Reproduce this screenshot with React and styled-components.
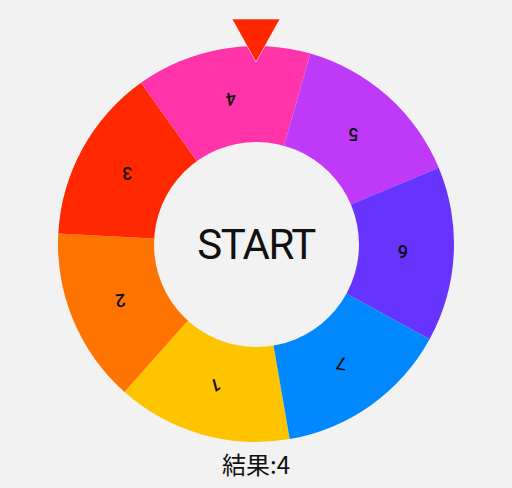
import React, { useState } from "react";
import styled, { createGlobalStyle } from "styled-components";

const GlobalStyle = createGlobalStyle`
  html, body {
    margin: 0;
    padding: 0;
    background: #f2f2f2;
  }
  body {
    font-family: Roboto, "Noto Sans CJK JP", sans-serif;
    color: #111;
  }
`;

const Screen = styled.div`
  display: flex;
  flex-direction: column;
  align-items: center;
  min-height: 488px;
`;

const WheelBox = styled.div`
  position: relative;
  width: ${(p) => p.size}px;
  height: ${(p) => p.size}px;
  margin-top: 46px;
`;

const Pointer = styled.svg`
  position: absolute;
  top: -28px;
  left: 50%;
  margin-left: -25px;
  z-index: 2;
`;

const Hub = styled.button`
  position: absolute;
  top: 50%;
  left: 50%;
  width: ${(p) => p.size}px;
  height: ${(p) => p.size}px;
  margin: ${(p) => -p.size / 2}px 0 0 ${(p) => -p.size / 2}px;
  border: none;
  border-radius: 50%;
  background: #f2f2f2;
  font-family: Roboto, sans-serif;
  font-size: 42px;
  letter-spacing: -1.5px;
  color: #111;
  padding: 0;
  cursor: pointer;
  display: flex;
  align-items: center;
  justify-content: center;
`;

const Result = styled.div`
  margin-top: 8px;
  font-family: "Noto Sans CJK JP", sans-serif;
  font-size: 24px;
  line-height: 28px;
  color: #111;
`;

const SEGMENTS = [
  { label: "1", color: "#ffc400", tilt: 165 },
  { label: "2", color: "#ff7300", tilt: 175 },
  { label: "3", color: "#ff2800", tilt: 180 },
  { label: "4", color: "#ff33aa", tilt: 172 },
  { label: "5", color: "#bf3af8", tilt: 180 },
  { label: "6", color: "#6633ff", tilt: 180 },
  { label: "7", color: "#0088ff", tilt: 188 },
];

const SIZE = 396;
const R = SIZE / 2;
const STEP = 360 / SEGMENTS.length;

// angle measured clockwise from 12 o'clock
const pt = (deg, r) => {
  const a = (deg * Math.PI) / 180;
  return [R + r * Math.sin(a), R - r * Math.cos(a)];
};

function Wheel({ offset }) {
  return (
    <svg width={SIZE} height={SIZE} viewBox={`0 0 ${SIZE} ${SIZE}`}>
      {SEGMENTS.map((s, i) => {
        const mid = offset + (i - 3) * STEP;
        const [x0, y0] = pt(mid - STEP / 2, R);
        const [x1, y1] = pt(mid + STEP / 2, R);
        const [lx, ly] = pt(mid, 147);
        return (
          <g key={s.label}>
            <path
              d={`M${R} ${R} L${x0} ${y0} A${R} ${R} 0 0 1 ${x1} ${y1} Z`}
              fill={s.color}
            />
            <text
              x={lx}
              y={ly}
              textAnchor="middle"
              dominantBaseline="central"
              fontFamily="Roboto, sans-serif"
              fontSize="18"
              fontWeight="500"
              fill="#111"
              transform={`rotate(${s.tilt} ${lx} ${ly})`}
            >
              {s.label}
            </text>
          </g>
        );
      })}
    </svg>
  );
}

export default function App() {
  const [result] = useState(4);
  return (
    <Screen>
      <GlobalStyle />
      <WheelBox size={SIZE}>
        <Pointer width="50" height="46" viewBox="0 0 50 46">
          <polygon
            points="1,1 49,1 25,44"
            fill="#ff2600"
            stroke="rgba(255,255,255,0.55)"
            strokeWidth="1"
          />
        </Pointer>
        <Wheel offset={-9.8} />
        <Hub size={205}>START</Hub>
      </WheelBox>
      <Result>結果:{result}</Result>
    </Screen>
  );
}
